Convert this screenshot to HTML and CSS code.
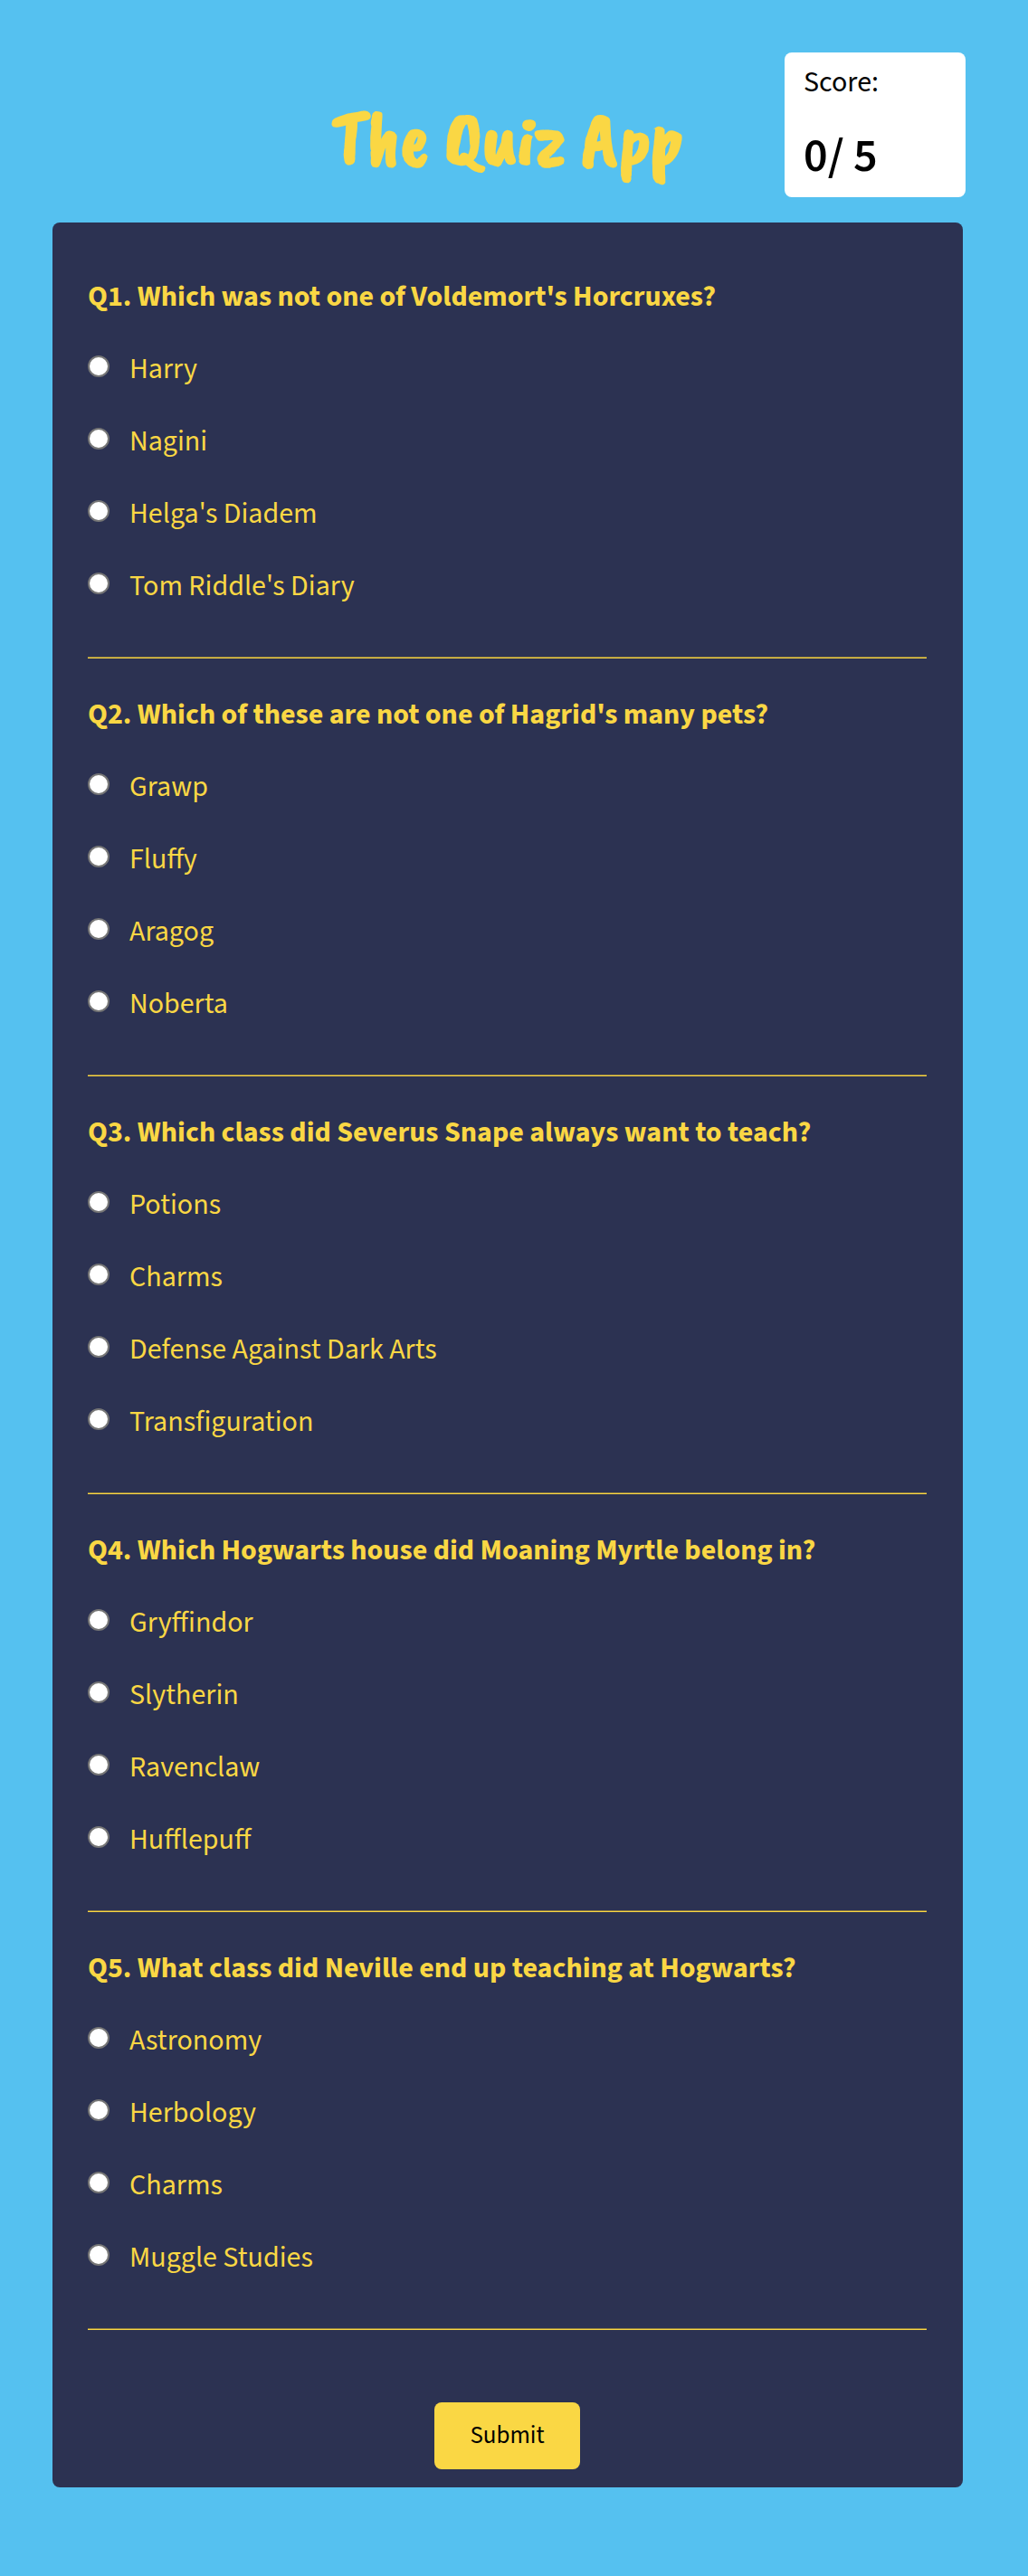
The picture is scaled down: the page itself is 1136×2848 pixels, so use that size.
FILE: index.html
```
<!DOCTYPE html>
<html lang="en">
<head>
<meta charset="utf-8">
<meta name="viewport" content="width=device-width, initial-scale=1">
<title>The Quiz App</title>
<link rel="stylesheet" href="styles.css">
</head>
<body>
<header class="header">
  <h1 class="title">The Quiz App</h1>
  <aside class="score">
    <p class="score-label">Score:</p>
    <p class="score-value">0/ 5</p>
  </aside>
</header>
<main>
  <form class="quiz">
    <fieldset class="question">
      <legend class="prompt">Q1. Which was not one of Voldemort's Horcruxes?</legend>
      <label class="option"><input class="radio" type="radio" name="q1">Harry</label>
      <label class="option"><input class="radio" type="radio" name="q1">Nagini</label>
      <label class="option"><input class="radio" type="radio" name="q1">Helga's Diadem</label>
      <label class="option"><input class="radio" type="radio" name="q1">Tom Riddle's Diary</label>
    </fieldset>
    <hr class="rule">
    <fieldset class="question">
      <legend class="prompt">Q2. Which of these are not one of Hagrid's many pets?</legend>
      <label class="option"><input class="radio" type="radio" name="q2">Grawp</label>
      <label class="option"><input class="radio" type="radio" name="q2">Fluffy</label>
      <label class="option"><input class="radio" type="radio" name="q2">Aragog</label>
      <label class="option"><input class="radio" type="radio" name="q2">Noberta</label>
    </fieldset>
    <hr class="rule">
    <fieldset class="question">
      <legend class="prompt">Q3. Which class did Severus Snape always want to teach?</legend>
      <label class="option"><input class="radio" type="radio" name="q3">Potions</label>
      <label class="option"><input class="radio" type="radio" name="q3">Charms</label>
      <label class="option"><input class="radio" type="radio" name="q3">Defense Against Dark Arts</label>
      <label class="option"><input class="radio" type="radio" name="q3">Transfiguration</label>
    </fieldset>
    <hr class="rule">
    <fieldset class="question">
      <legend class="prompt">Q4. Which Hogwarts house did Moaning Myrtle belong in?</legend>
      <label class="option"><input class="radio" type="radio" name="q4">Gryffindor</label>
      <label class="option"><input class="radio" type="radio" name="q4">Slytherin</label>
      <label class="option"><input class="radio" type="radio" name="q4">Ravenclaw</label>
      <label class="option"><input class="radio" type="radio" name="q4">Hufflepuff</label>
    </fieldset>
    <hr class="rule">
    <fieldset class="question">
      <legend class="prompt">Q5. What class did Neville end up teaching at Hogwarts?</legend>
      <label class="option"><input class="radio" type="radio" name="q5">Astronomy</label>
      <label class="option"><input class="radio" type="radio" name="q5">Herbology</label>
      <label class="option"><input class="radio" type="radio" name="q5">Charms</label>
      <label class="option"><input class="radio" type="radio" name="q5">Muggle Studies</label>
    </fieldset>
    <hr class="rule">
    <button class="submit" type="button">Submit</button>
  </form>
</main>
</body>
</html>
```
FILE: styles.css
```
* {
  box-sizing: border-box;
}

body {
  margin: 0;
  padding: 58px 72px 99px 58px;
  background: #55c1f0;
  color: #000;
  font-family: "Source Sans 3", "Noto Sans CJK JP", sans-serif;
  font-size: 32px;
  line-height: 40px;
}

.header {
  display: grid;
  grid-template-columns: 196px 1fr 200px;
  align-items: center;
  margin: 0 -3px 28px 0;
}

.title {
  grid-column: 2;
  margin: 0;
  padding-top: 30px;
  color: #fad744;
  font-family: "Caveat Brush", Lato, sans-serif;
  font-size: 84px;
  font-weight: 700;
  line-height: 100px;
  text-align: center;
  white-space: nowrap;
}

.score {
  padding: 13px 21px;
  border-radius: 8px;
  background: #fff;
}

.score-label,
.score-value {
  margin: 0;
}

.score-label {
  margin-bottom: 30px;
}

.score-value {
  font-size: 52px;
  font-weight: 600;
  line-height: 64px;
}

.quiz {
  display: flex;
  flex-direction: column;
  padding: 42px 40px 20px 39px;
  border-radius: 8px;
  background: #2c3252;
  color: #fad744;
}

.question {
  min-width: 0;
  margin: 0;
  padding: 0;
  border: 0;
}

.prompt {
  padding: 20px 0;
  font-weight: 700;
}

.option {
  display: flex;
  align-items: center;
  gap: 22px;
  padding: 20px 0;
}

.radio {
  appearance: none;
  flex: none;
  width: 24px;
  height: 24px;
  margin: 0 0 6px;
  border: 2px solid #767676;
  border-radius: 50%;
  background: #fff;
}

.radio:checked {
  background: radial-gradient(circle, #0075ff 6px, #fff 7px);
}

.rule {
  width: 100%;
  margin: 38px 0 22px;
  border: 0;
  border-top: 1px solid #938140;
  border-bottom: 1px solid #fad744;
}

.submit {
  align-self: center;
  min-width: 160px;
  margin-top: 58px;
  padding: 17px 39px;
  border: 0;
  border-radius: 8px;
  background: #fad744;
  color: #000;
  font-family: inherit;
  font-size: 27px;
  line-height: 40px;
}
```
